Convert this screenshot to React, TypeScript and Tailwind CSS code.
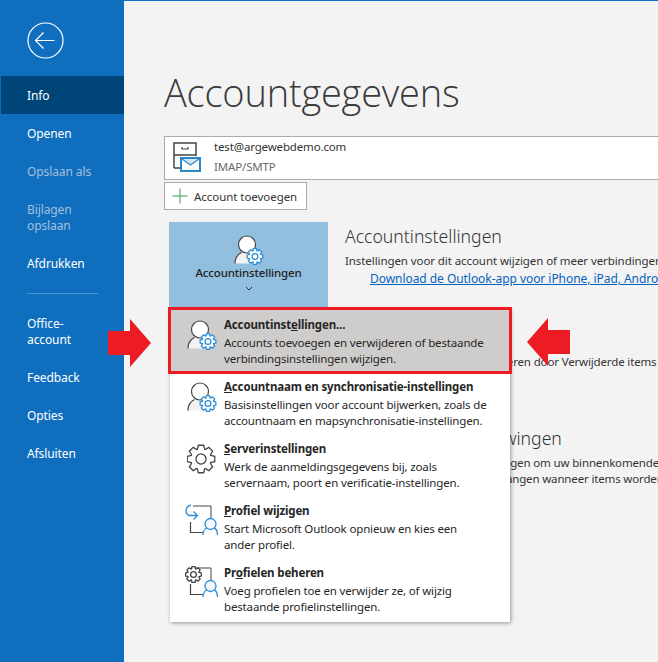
const font = "font-['Noto_Sans',sans-serif]";
const body = "text-[11.5px] tracking-[-0.15px] leading-[16px]";
const heading = "text-[17.6px] font-light leading-[26px] text-[#333]";

function NavItem({ label, active, dim }: { label: string; active?: boolean; dim?: boolean }) {
  return (
    <div
      className={`pt-[12px] pb-[10px] text-[12px] tracking-[-0.1px] leading-[16px] ${
        active ? "ml-px bg-[#004578] pl-[26px] text-white" : dim ? "pl-[27px] text-[#a5bfd8]" : "pl-[27px] text-white"
      }`}
    >
      <span className="block w-[80px]">{label}</span>
    </div>
  );
}

function Gear({ cx, cy, r, color }: { cx: number; cy: number; r: number; color: string }) {
  const pts: string[] = [];
  for (let i = 0; i < 8; i++) {
    const a = (i * Math.PI) / 4;
    const step = 0.24;
    const inner = r * 0.74;
    [
      [a - step * 1.5, inner],
      [a - step * 0.8, r],
      [a + step * 0.8, r],
      [a + step * 1.5, inner],
    ].forEach(([t, d]) => pts.push(`${(cx + Math.cos(t) * d).toFixed(2)},${(cy + Math.sin(t) * d).toFixed(2)}`));
  }
  return (
    <g>
      <polygon points={pts.join(" ")} fill="#fff" stroke={color} strokeWidth="1.300" />
      <circle cx={cx} cy={cy} r={r * 0.36} stroke={color} strokeWidth="1.300" fill="none" />
    </g>
  );
}

function UserGear() {
  return (
    <svg width="30" height="30" viewBox="0 0 30 30" fill="none">
      <path d="M1 28.500c0-6 3-10 8-11.500h7l4 11.500z" fill="#f3f2f1" />
      <circle cx="13" cy="9.500" r="8.500" fill="#fff" stroke="#444" strokeWidth="1.200" />
      <path d="M1 28.500c0-5 2.500-9 6.500-11" stroke="#444" strokeWidth="1.200" />
      <Gear cx={21} cy={21.500} r={8} color="#2b8fd8" />
    </svg>
  );
}

function ServerGear() {
  return (
    <svg width="30" height="30" viewBox="0 0 30 30" fill="none">
      <Gear cx={14} cy={15} r={14} color="#444" />
    </svg>
  );
}

function ProfileFrame({ children }: { children: React.ReactNode }) {
  return (
    <svg width="33" height="32" viewBox="0 0 33 32" fill="none" className="-mt-[2px] -ml-[2px]">
      <path d="M8 2h18v16" stroke="#444" strokeWidth="1" />
      <path d="M5.500 18v10.500h13" stroke="#444" strokeWidth="1.200" />
      <path d="M18 31c0-5 3-8 7.500-8s7 3 7 8" stroke="#2b8fd8" strokeWidth="1.300" fill="#fff" />
      <circle cx="25.500" cy="20" r="5.500" fill="#f3f7fb" stroke="#2b8fd8" strokeWidth="1.300" />
      {children}
    </svg>
  );
}

function MenuItem({ icon, title, lines, active }: { icon: React.ReactNode; title: React.ReactNode; lines: string[]; active?: boolean }) {
  return (
    <div
      className={`flex pl-[17px] ${
        active
          ? "h-[63px] bg-[#cfcdcb] pt-[8px] outline-[3px] outline-offset-[-1px] outline-[#ed1c24]"
          : "h-[62px] pt-[7px]"
      }`}
    >
      <div className="mt-[3px] w-[37px] shrink-0">{icon}</div>
      <div className={`${body} whitespace-nowrap text-[#262626]`}>
        <div className="font-bold">{title}</div>
        <div className="mt-[2px]">{lines[0]}</div>
        <div>{lines[1]}</div>
      </div>
    </div>
  );
}

function BigArrow({ flip, className }: { flip?: boolean; className: string }) {
  return (
    <svg width="43" height="48" viewBox="0 0 43 48" className={`absolute ${className}`}>
      <polygon
        points={flip ? "0,24 21,0 21,12 43,12 43,36 21,36 21,48" : "43,24 22,0 22,12 0,12 0,36 22,36 22,48"}
        fill="#ed1c24"
      />
    </svg>
  );
}

export default function App() {
  return (
    <div className={`relative flex h-[662px] w-[658px] overflow-hidden bg-[#f3f3f3] ${font}`}>
      <aside className="w-[124px] shrink-0 bg-[#106ebe]">
        <div className="pl-[27px] pt-[22px] pb-[17px]">
          <svg width="37" height="37" viewBox="0 0 37 37" fill="none" stroke="#fff" strokeWidth="1.200" className="block">
            <circle cx="18.500" cy="18.500" r="17.500" />
            <path d="M8.500 18.500h19M16.500 10.500l-8 8 8 8" />
          </svg>
        </div>
        <NavItem label="Info" active />
        <NavItem label="Openen" />
        <NavItem label="Opslaan als" dim />
        <NavItem label="Bijlagen opslaan" dim />
        <NavItem label="Afdrukken" />
        <div className="ml-[27px] mr-[26px] mt-[11px] mb-[10px] h-px bg-[#4a94d0]" />
        <NavItem label="Office-account" />
        <NavItem label="Feedback" />
        <NavItem label="Opties" />
        <NavItem label="Afsluiten" />
      </aside>

      <main className="min-w-0 flex-1 overflow-hidden border-t border-[#106ebe] pl-[40px] text-[#333] whitespace-nowrap">
        <h1 className="mt-[61px] h-[62px] font-['Open_Sans',sans-serif] text-[38px] font-light tracking-[-0.2px] leading-[60px] text-[#3b3b3b]">Accountgegevens</h1>
        <div className="mt-[12px] flex h-[44px] w-[600px] items-center border border-[#ababab] bg-white">
          <svg width="30" height="32" viewBox="0 0 30 32" fill="none" className="ml-[7px]">
            <path d="M2 26V1h22v13M2 13h22M2 26h6" stroke="#444" strokeWidth="1.500" />
            <path d="M10 5v2h6V5" stroke="#444" strokeWidth="1.200" />
            <rect x="9" y="16" width="19" height="13" fill="#fff" stroke="#2b88c8" strokeWidth="2" />
            <path d="M10 17l8.500 6 8.500-6" fill="#d5e6f3" stroke="#2b88c8" strokeWidth="1.200" />
          </svg>
          <div className="ml-[12px] -mt-[2px] text-[11.5px] tracking-[-0.15px] leading-[20px]">
            <div className="text-[#333]">test@argewebdemo.com</div>
            <div className="text-[#6a6a6a]">IMAP/SMTP</div>
          </div>
        </div>
        <div className="mt-[2px] flex h-[28px] w-[143px] items-center border border-[#ababab] bg-white text-[11.5px] tracking-[-0.05px] leading-[16px]">
          <svg width="16" height="16" viewBox="0 0 16 16" fill="none" stroke="#3a9a5a" className="ml-[7px]">
            <path d="M8 0.500v15M0.500 8h15" />
          </svg>
          <span className="ml-[6px] pt-px">Account toevoegen</span>
        </div>

        <div className="mt-[12px] flex">
          <div className="ml-[5px] flex h-[85px] w-[159px] shrink-0 flex-col items-center bg-[#92bfe0] pt-[13px]">
            <UserGear />
            <div className={`${body} font-medium text-[#222]`}>Accountinstellingen</div>
            <svg width="8" height="5" viewBox="0 0 8 5" fill="none" stroke="#333" className="mt-[5px]">
              <path d="M1 1l3 3 3-3" />
            </svg>
          </div>
          <div className="ml-[17px] mt-px min-w-0">
            <div className={heading}>Accountinstellingen</div>
            <div className="mt-[4px] text-[11.5px] tracking-[-0.08px] leading-[16px]">Instellingen voor dit account wijzigen of meer verbindingen instellen.</div>
            <div className="mt-[2px] flex items-center text-[12px] tracking-[-0.05px] leading-[16px]">
              <span className="ml-[5px] h-[5px] w-[5px] bg-[#333]" />
              <span className="ml-[20px] text-[#0563c1] underline">Download de Outlook-app voor iPhone, iPad, Android of Windows</span>
            </div>
            <div className={`mt-[27px] ${heading}`}>Postvak instellen</div>
            <div className={`mt-[14px] ${body}`}>De maat van uw postvak reduceren door Verwijderde items leeg te maken</div>
            <div className={`mt-[55px] ${heading}`}>Regels en waarschuwingen</div>
            <div className={`mt-[4px] ${body}`}>Gebruik regels en waarschuwingen om uw binnenkomende</div>
            <div className={body}>berichten te bewerken en ontvangen wanneer items worden</div>
          </div>
        </div>
      </main>

      <div className="absolute left-[170px] top-[309px] w-[340px] bg-white pb-[2px] shadow-[1px_1px_4px_rgba(0,0,0,0.4)]">
        <MenuItem
          active
          icon={<UserGear />}
          title={<>Accountinst<u>e</u>llingen...</>}
          lines={["Accounts toevoegen en verwijderen of bestaande", "verbindingsinstellingen wijzigen."]}
        />
        <MenuItem
          icon={<UserGear />}
          title={<><u>A</u>ccountnaam en synchronisatie-instellingen</>}
          lines={["Basisinstellingen voor account bijwerken, zoals de", "accountnaam en mapsynchronisatie-instellingen."]}
        />
        <MenuItem
          icon={<ServerGear />}
          title={<><u>S</u>erverinstellingen</>}
          lines={["Werk de aanmeldingsgegevens bij, zoals", "servernaam, poort en verificatie-instellingen."]}
        />
        <MenuItem
          icon={
            <ProfileFrame>
              <path d="M6 1C1 2-1 9 4 11.500h8M8.500 7.500l4 4-4 4" stroke="#2b8fd8" strokeWidth="1.300" fill="none" />
            </ProfileFrame>
          }
          title={<><u>P</u>rofiel wijzigen</>}
          lines={["Start  Microsoft Outlook opnieuw en kies een", "ander profiel."]}
        />
        <MenuItem
          icon={
            <ProfileFrame>
              <Gear cx={8.500} cy={8.500} r={8} color="#444" />
            </ProfileFrame>
          }
          title={<>Pr<u>o</u>fielen beheren</>}
          lines={["Voeg profielen toe en verwijder ze, of wijzig", "bestaande profielinstellingen."]}
        />
      </div>

      <BigArrow className="left-[108px] top-[319px]" />
      <BigArrow flip className="left-[527px] top-[318px]" />
    </div>
  );
}
